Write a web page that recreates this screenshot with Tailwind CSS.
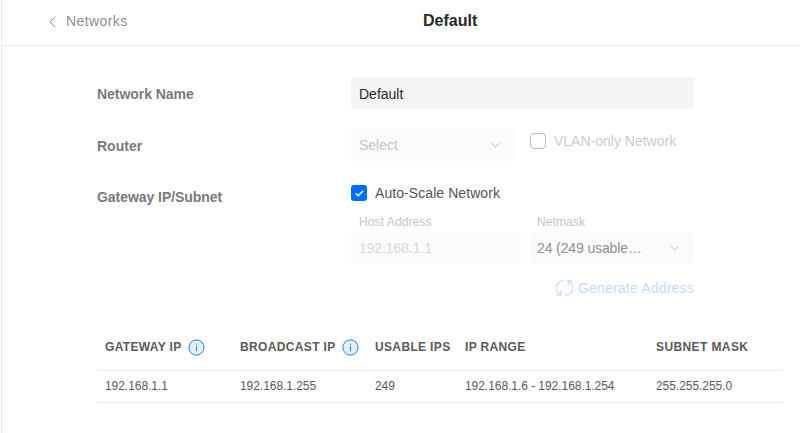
<!DOCTYPE html>
<html lang="en">
<head>
<meta charset="utf-8">
<title>Networks</title>
<script src="https://cdn.jsdelivr.net/npm/@tailwindcss/browser@4"></script>
</head>
<body class="h-[433px] w-[800px] overflow-hidden bg-white pl-px font-['Liberation_Sans',Arial,sans-serif] text-sm leading-4">
<div class="h-full border-l border-[#ebebeb]">
  <header class="flex h-[46px] border-b border-[#ececec]">
    <a class="mt-[13px] flex h-4 w-[421px] items-center pl-[47px] tracking-[0.4px] text-[#8f8f8f]">
      <svg class="mr-[10px] mt-px h-3 w-[7px]" viewBox="0 0 7 12" fill="none" stroke="#8a8a8a" stroke-width="1"><path d="M6.3.5 1 6l5.3 5.5"/></svg>Networks</a>
    <h1 class="mt-[13px] text-base leading-4 font-bold text-[#282828]">Default</h1>
  </header>

  <main class="pl-[95px]">
    <div class="mt-[31px] flex h-8">
      <label class="w-[254px] pt-[9px] font-bold tracking-[-0.05px] text-[#7a7a7a]">Network Name</label>
      <div class="w-[343px] rounded bg-[#f5f5f7] px-2 pt-[9px] text-[#282828]">Default</div>
    </div>
    <div class="mt-5 flex h-8">
      <label class="w-[254px] pt-[9px] font-bold text-[#7a7a7a]">Router</label>
      <div class="flex w-[164px] items-center justify-between rounded bg-[#fbfbfb] pl-2 pr-[15px] text-[#c3c3c3]">Select
        <svg class="h-[6px] w-[9px]" viewBox="0 0 9 6" fill="none" stroke="#bebebe"><path d="M.4.8 4.5 4.9 8.6.8"/></svg></div>
      <div class="mt-1 ml-[15px] flex h-4 items-center text-[#cccccc]"><span class="mr-2 h-4 w-4 rounded-[4px] border border-[#bbb9cc]"></span>VLAN-only Network</div>
    </div>
    <div class="mt-6 flex h-[112px]">
      <label class="w-[254px] pt-1 font-bold tracking-[-0.05px] text-[#7a7a7a]">Gateway IP/Subnet</label>
      <div class="w-[343px]">
        <div class="flex h-4 items-center tracking-[0.07px] text-[#555]"><span class="mr-2 flex h-4 w-4 items-center justify-center rounded-[3px] bg-[#006fff]"><svg class="h-[7px] w-[9px]" viewBox="0 0 9 7" fill="none" stroke="#fff" stroke-width="1.4"><path d="m.7 3.2 2.5 2.5L8.3.8"/></svg></span>Auto-Scale Network</div>
        <div class="mt-[13px] flex text-xs leading-4 tracking-[0.1px] text-[#c5c5c5]"><span class="w-[178px] pl-2">Host Address</span><span class="pl-2">Netmask</span></div>
        <div class="mt-[2px] flex h-8 justify-between">
          <div class="w-[170px] rounded bg-[#fafcfb] px-2 pt-2 tracking-[-0.1px] text-[#d6d8d7]">192.168.1.1</div>
          <div class="flex w-[164px] items-center justify-between rounded bg-[#fbfbfb] pl-[7px] pr-[15px] tracking-[-0.12px] text-[#8f8f8f]">24 (249 usable…
            <svg class="h-[6px] w-[9px]" viewBox="0 0 9 6" fill="none" stroke="#bebebe"><path d="M.4.8 4.5 4.9 8.6.8"/></svg></div>
        </div>
        <div class="mt-4 flex h-4 items-center justify-end tracking-[0.2px] text-[#c3dcfb]">
          <svg class="mr-[5px] h-4 w-[17px] shrink-0" viewBox="0 0 17 16" fill="none" stroke="#bfdbfe" stroke-width="1.2"><path d="M7.8.9A7.1 7.1 0 0 0 4.2 14.4M.6 15.2H4.9V10.6M9.2 15.1A7.1 7.1 0 0 0 12.8 1.6M16.4.8H12.1V5.4"/></svg>Generate Address</div>
      </div>
    </div>

    <table class="mt-[22px] w-[686px] table-fixed border-collapse text-left text-xs text-[#5a5a5a]">
      <colgroup><col class="w-[135px]"><col class="w-[135px]"><col class="w-[90px]"><col class="w-[191px]"><col></colgroup>
      <thead>
        <tr class="h-[51px] border-b border-[#f0f0f0] tracking-[0.35px] whitespace-nowrap">
          <th class="pt-[5px] pb-0 pl-2"><div class="flex h-4 items-center">GATEWAY IP<svg class="mt-[2px] ml-[6px] h-[17px] w-[17px] shrink-0" viewBox="0 0 17 17" fill="none"><circle cx="8.5" cy="8.5" r="7.6" fill="#e5f0ff" stroke="#1a7dfb"/><path d="M8.5 7v5.3M8.5 4.6v1.2" stroke="#1a7dfb"/></svg></div></th>
          <th class="pt-[5px] pb-0 pl-2"><div class="flex h-4 items-center">BROADCAST IP<svg class="mt-[2px] ml-[6px] h-[17px] w-[17px] shrink-0" viewBox="0 0 17 17" fill="none"><circle cx="8.5" cy="8.5" r="7.6" fill="#e5f0ff" stroke="#1a7dfb"/><path d="M8.5 7v5.3M8.5 4.6v1.2" stroke="#1a7dfb"/></svg></div></th>
          <th class="pt-[5px] pb-0 pl-2">USABLE IPS</th>
          <th class="pt-[5px] pb-0 pl-2">IP RANGE</th>
          <th class="pt-[5px] pb-0 pl-2 tracking-[0.4px]">SUBNET MASK</th>
        </tr>
      </thead>
      <tbody>
        <tr class="h-8 border-b border-[#e9e9e9] tracking-[-0.05px]">
          <td class="pl-2">192.168.1.1</td>
          <td class="pl-2">192.168.1.255</td>
          <td class="pl-2">249</td>
          <td class="pl-2">192.168.1.6 - 192.168.1.254</td>
          <td class="pl-2">255.255.255.0</td>
        </tr>
      </tbody>
    </table>
  </main>
</div>
</body>
</html>
